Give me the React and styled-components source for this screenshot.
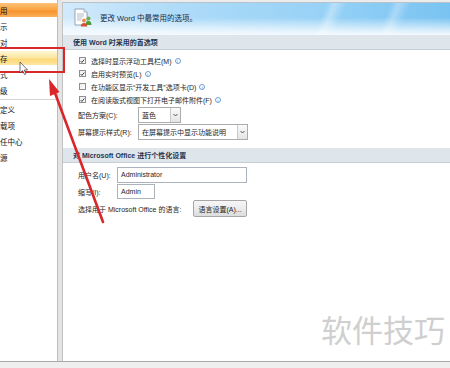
import React from "react";
import styled, { createGlobalStyle } from "styled-components";

const GlobalStyle = createGlobalStyle`
  html, body { margin: 0; padding: 0; }
  body {
    width: 450px;
    height: 368px;
    overflow: hidden;
    background: #ececec;
    font-family: "Liberation Sans", "Noto Sans CJK SC", sans-serif;
    font-size: 7px;
    color: #1e1e1e;
  }
  * { box-sizing: border-box; }
`;

const Window = styled.div`
  position: relative;
  width: 450px;
  height: 368px;
  overflow: hidden;
  display: flex;
  flex-direction: column;
`;

const Main = styled.div`
  display: flex;
  height: 362px;
  border-bottom: 1px solid #a9a9a9;
`;

const Footer = styled.div`
  flex: 1;
  background: #efefef;
`;

const Sidebar = styled.nav`
  width: 58px;
  background: #fff;
  border-right: 1px solid #bdbdbd;
  overflow: hidden;
`;

const NavList = styled.div`
  display: flex;
  flex-direction: column;
  gap: 2px;
  padding-top: 3px;
  margin-left: -7.5px;
`;

const NavItem = styled.div`
  height: 14px;
  display: flex;
  align-items: center;
  white-space: nowrap;
  font-size: 7.5px;
  color: #111;
  background: ${(p) =>
    p.$state === "active"
      ? "linear-gradient(to bottom, #fcc37a 0%, #f9a443 45%, #f7952f 60%, #fab15a 100%)"
      : p.$state === "hover"
      ? "linear-gradient(to bottom, #fef6d4 0%, #fde8a4 45%, #fcd979 60%, #fde7a2 100%)"
      : "transparent"};
`;

const NavSep = styled.div`
  height: 1px;
  background: #d4d4d4;
`;

const Gutter = styled.div`
  width: 4px;
  background: #e4e4e4;
`;

const Content = styled.section`
  flex: 1;
  margin-top: 2px;
  background: #fff;
  border-left: 1px solid #c2c2c2;
  border-top: 1px solid #b7c2ca;
  display: flex;
  flex-direction: column;
`;

const Header = styled.div`
  position: relative;
  height: 32px;
  flex-shrink: 0;
  display: flex;
  align-items: center;
  gap: 7px;
  padding: 0 0 4px 10px;
  background-color: #a8d8f6;
  background-image: linear-gradient(to bottom, rgba(255, 255, 255, 0) 45%, rgba(255, 255, 255, 0.65) 82%, #f5faff 100%), linear-gradient(to right, #d2eafb 0%, #aedbf8 30%, #98d2f6 65%, #79c3f2 100%);
`;

const Streaks = styled.div`
  position: absolute;
  inset: 0;
  pointer-events: none;
  background-image: linear-gradient(112deg, transparent 66%, rgba(255, 255, 255, 0.35) 68%, transparent 71%, transparent 82%, rgba(255, 255, 255, 0.3) 84%, transparent 87%);
`;

const HeaderTitle = styled.div`
  position: relative;
  font-size: 7.5px;
  color: #1c2a40;
`;

const Band = styled.div`
  height: 15px;
  flex-shrink: 0;
  display: flex;
  align-items: center;
  padding-left: 10px;
  margin-top: ${(p) => p.$top || 0}px;
  background: #dee6ec;
  border-bottom: 1px solid #c6cfd6;
  font-weight: bold;
  color: #1f3550;
`;

const Group = styled.div`
  display: flex;
  flex-direction: column;
  padding: ${(p) => p.$pad};
`;

const CheckRow = styled.label`
  height: 13px;
  display: flex;
  align-items: center;
  gap: 5px;
  padding-left: 16px;
`;

const Box = styled.span`
  width: 7px;
  height: 7px;
  border: 1px solid #8e8e8e;
  background: linear-gradient(135deg, #ececec, #fff);
  display: flex;
  align-items: center;
  justify-content: center;
`;

const Info = styled.span`
  width: 6px;
  height: 6px;
  border-radius: 50%;
  border: 0.8px solid #6f9fd6;
  color: #4c86cc;
  font-size: 4.5px;
  line-height: 5px;
  text-align: center;
  margin-left: -2px;
  font-family: "Liberation Serif", serif;
`;

const FieldRow = styled.div`
  height: ${(p) => p.$h || 16}px;
  display: flex;
  align-items: center;
  padding-left: 15px;
  margin-top: ${(p) => p.$top || 0}px;
`;

const Label = styled.span`
  width: ${(p) => p.$w}px;
  flex-shrink: 0;
  white-space: nowrap;
`;

const Select = styled.div`
  width: ${(p) => p.$w}px;
  height: 16px;
  display: flex;
  border: 1px solid #acacac;
  background: #fff;
`;

const SelectValue = styled.span`
  flex: 1;
  display: flex;
  align-items: center;
  padding-left: 3px;
`;

const SelectArrow = styled.span`
  width: 10px;
  border-left: 1px solid #c9c9c9;
  background: linear-gradient(to bottom, #fbfbfb, #e4e4e4);
  display: flex;
  align-items: center;
  justify-content: center;
`;

const Input = styled.div`
  width: ${(p) => p.$w}px;
  height: ${(p) => p.$h}px;
  border: 1px solid #abb3bc;
  display: flex;
  align-items: center;
  padding-left: 3px;
  background: #fff;
`;

const Button = styled.div`
  height: 17px;
  width: 54px;
  margin-left: 4px;
  display: flex;
  align-items: center;
  justify-content: center;
  border: 1px solid #a6a6a6;
  border-radius: 2px;
  background: linear-gradient(to bottom, #f6f6f6 0%, #ececec 50%, #dcdcdc 100%);
  white-space: nowrap;
`;

const Overlay = styled.svg`
  position: absolute;
  left: 0;
  top: 0;
  pointer-events: none;
`;

const Highlight = styled.div`
  position: absolute;
  left: -3px;
  top: 47px;
  width: 68px;
  height: 26px;
  border: 2.5px solid #d8282c;
  pointer-events: none;
`;

const Watermark = styled.div`
  position: absolute;
  right: 5px;
  bottom: 17px;
  font-family: "Noto Sans CJK SC", sans-serif;
  font-size: 31px;
  color: #cfcfcf;
`;

function Check() {
  return (
    <svg width="6" height="6" viewBox="0 0 6 6">
      <path d="M0.8 3.2 L2.3 4.7 L5.2 1.2" fill="none" stroke="#222" strokeWidth="1.1" />
    </svg>
  );
}

function Chevron() {
  return (
    <svg width="5" height="4" viewBox="0 0 5 4">
      <path d="M0.5 1 L2.5 3 L4.5 1" fill="none" stroke="#444" strokeWidth="0.9" />
    </svg>
  );
}

function OptionsIcon() {
  return (
    <svg width="20" height="19" viewBox="0 0 20 19" style={{ position: "relative" }}>
      <path d="M2 1 H11 L14 4 V17 H2 Z" fill="#fff" stroke="#7d8fa4" strokeWidth="0.8" />
      <path d="M11 1 V4 H14" fill="#e8eef4" stroke="#7d8fa4" strokeWidth="0.6" />
      <path d="M4 6 H11 M4 8 H11 M4 10 H9 M4 12 H8" stroke="#9aa8b8" strokeWidth="0.8" />
      <circle cx="15.5" cy="10.5" r="2" fill="#6bb04a" />
      <path d="M12.5 17 Q12.5 13 15.5 13 Q18.5 13 18.5 17 Z" fill="#4f9a36" />
      <circle cx="11" cy="12.5" r="2" fill="#f08a50" />
      <path d="M7.8 18.5 Q7.8 15 11 15 Q14.2 15 14.2 18.5 Z" fill="#d9502c" />
    </svg>
  );
}

const navItems = [
  { text: "常用", state: "active" },
  { text: "显示" },
  { text: "校对" },
  { text: "保存", state: "hover" },
  { text: "版式" },
  { text: "高级", sep: true },
  { text: "自定义" },
  { text: "加载项" },
  { text: "信任中心" },
  { text: "资源" },
];

const checks = [
  { text: "选择时显示浮动工具栏(M)", on: true, info: true },
  { text: "启用实时预览(L)", on: true, info: true },
  { text: "在功能区显示“开发工具”选项卡(D)", on: false, info: true },
  { text: "在阅读版式视图下打开电子邮件附件(F)", on: true, info: true },
];

export default function App() {
  return (
    <Window>
      <GlobalStyle />
      <Main>
        <Sidebar>
          <NavList>
            {navItems.map((it) => (
              <React.Fragment key={it.text}>
                <NavItem $state={it.state}>{it.text}</NavItem>
                {it.sep && <NavSep />}
              </React.Fragment>
            ))}
          </NavList>
        </Sidebar>
        <Gutter />
        <Content>
          <Header>
            <Streaks />
            <OptionsIcon />
            <HeaderTitle>更改 Word 中最常用的选项。</HeaderTitle>
          </Header>
          <Band>使用 Word 时采用的首选项</Band>
          <Group $pad="4px 0 0 0">
            {checks.map((c) => (
              <CheckRow key={c.text}>
                <Box>{c.on && <Check />}</Box>
                <span>{c.text}</span>
                {c.info && <Info>i</Info>}
              </CheckRow>
            ))}
            <FieldRow $top={1}>
              <Label $w={60}>配色方案(C):</Label>
              <Select $w={43}>
                <SelectValue>蓝色</SelectValue>
                <SelectArrow>
                  <Chevron />
                </SelectArrow>
              </Select>
            </FieldRow>
            <FieldRow $h={17}>
              <Label $w={60}>屏幕提示样式(R):</Label>
              <Select $w={110}>
                <SelectValue>在屏幕提示中显示功能说明</SelectValue>
                <SelectArrow>
                  <Chevron />
                </SelectArrow>
              </Select>
            </FieldRow>
          </Group>
          <Band $top={8}>对 Microsoft Office 进行个性化设置</Band>
          <Group $pad="3px 0 0 0">
            <FieldRow $h={17}>
              <Label $w={39}>用户名(U):</Label>
              <Input $w={130} $h={16}>Administrator</Input>
            </FieldRow>
            <FieldRow $h={17}>
              <Label $w={39}>缩写(I):</Label>
              <Input $w={38} $h={15}>Admin</Input>
            </FieldRow>
            <FieldRow $h={17}>
              <Label $w={111}>选择用于 Microsoft Office 的语言:</Label>
              <Button>语言设置(A)...</Button>
            </FieldRow>
          </Group>
        </Content>
      </Main>
      <Footer />
      <Highlight />
      <Overlay width="450" height="368" viewBox="0 0 450 368">
        <line x1="103" y1="222" x2="55" y2="93" stroke="#d8262a" strokeWidth="2.6" strokeLinecap="round" />
        <path d="M49 79 L59.5 92 L50 96 Z" fill="#d8262a" />
        <path
          d="M20 62 L20 73 L22.6 70.6 L24.5 74.5 L26 73.8 L24.2 70 L27.6 70 Z"
          fill="#fff"
          stroke="#333"
          strokeWidth="0.7"
          strokeLinejoin="round"
        />
      </Overlay>
      <Watermark>软件技巧</Watermark>
    </Window>
  );
}
